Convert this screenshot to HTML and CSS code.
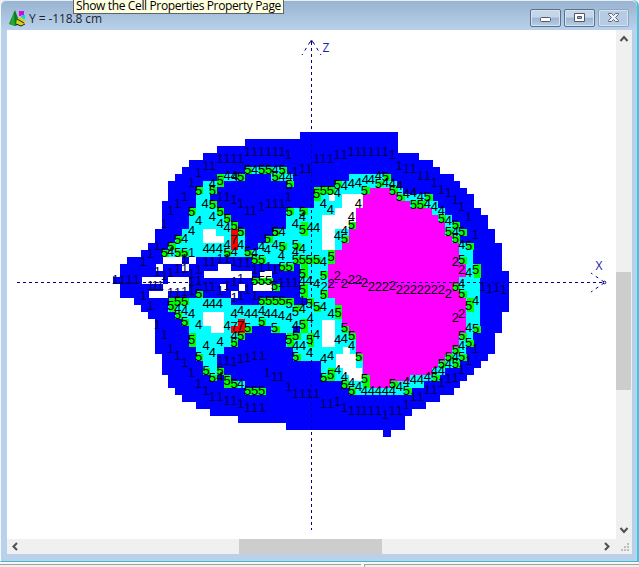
FILE: index.html
```html
<!DOCTYPE html>
<html lang="en">
<head>
<meta charset="utf-8">
<title>Y = -118.8 cm</title>
<link rel="stylesheet" href="styles.css">
</head>
<body>
<div class="window">
  <header class="titlebar">
    <svg class="app-icon" width="17" height="17" viewBox="0 0 17 17">
      <path d="M10 1h5v5h-5z" fill="#e000e0"/><path d="M12 5h4v4h-4z" fill="#00d8e8"/>
      <path d="M6 0l5 14-5 2-6-2z" fill="#087b24"/><path d="M5 2l1 14-5-2z" fill="#20a830"/>
      <path d="M8 9l4-2 4 3v4l-4 2-5-2z" fill="#d8d020"/><path d="M8 9l7 4M7 14l5 2 4-2" fill="none" stroke="#222"/>
    </svg>
    <h1 class="title">Y = -118.8 cm</h1>
    <div class="buttons">
      <span class="btn"><svg width="30" height="16"><rect x="9.5" y="7.500" width="10" height="4" rx="1" fill="#fff" stroke="#535666"/></svg></span>
      <span class="btn"><svg width="30" height="16"><path d="M9.500 3.500h10v8h-10z" fill="#fff" stroke="#535666"/><path d="M12.500 6.500h4v2h-4z" fill="#9bb5d2" stroke="#535666"/></svg></span>
      <span class="btn close"><svg width="30" height="16"><path d="M9.500 3.500h3l2 2 2-2h3v1l-3 3 3 3v1h-3l-2-2-2 2h-3v-1l3-3-3-3z" fill="#edf2f8" stroke="#60677a"/></svg></span>
    </div>
  </header>
  <main class="client">
    <svg class="plot" id="plot" width="609" height="509" viewBox="7 30 609 509">
      <path fill="#00f" shape-rendering="crispEdges" d="M113 277H120V264H127V257H141V250H148V243H155V229H162V201H168V181H175V174H182V167H189V160H203V153H217V146H245V139H300V132H398V153H419V160H433V167H440V174H454V181H460V188H467V194H474V208H481V215H488V229H495V243H502V271H509V312H502V333H495V354H488V361H481V368H474V375H467V381H460V388H454V395H440V402H426V409H412V416H405V430H391V437H383V430H286V423H238V416H210V409H196V402H182V395H175V388H168V375H162V354H155V319H148V312H141V305H134V298H120V284H113Z"/>
      <g id="cells" shape-rendering="crispEdges"></g>
      <g class="axes"><path stroke-dasharray="3 3" shape-rendering="crispEdges" d="M311.500 42V530M17 282.500H602"/><path stroke-dasharray="3 4" d="M310 42L302 55M313 42L321 55M604 282L591 273M604 283L591 292"/></g>
      <circle cx="311.500" cy="41.500" r="1.300" fill="#00008b"/><circle cx="604.500" cy="282.500" r="1.300" fill="none" stroke="#00008b"/>
      <text class="axis" x="322.500" y="52">Z</text><text class="axis" x="595.500" y="270">X</text>
      <g id="labels" class="labels"></g>
    </svg>
    <div class="vscroll"><svg width="16" height="16"><path d="M4.500 11l3.500-4 3.500 4"/></svg><div class="vthumb"></div><svg width="16" height="16"><path d="M4.500 5l3.500 4 3.500-4"/></svg></div>
    <div class="hscroll"><svg width="16" height="15"><path d="M10 4L6.500 7.500 10 11"/></svg><div class="hthumb"></div><svg width="16" height="15"><path d="M5 4l3.500 3.500L5 11"/></svg></div>
    <div class="grip"><svg width="16" height="15"><path d="M11 4h2v2h-2zM8 7h2v2H8zM11 7h2v2h-2zM5 10h2v2H5zM8 10h2v2H8zM11 10h2v2h-2z"/></svg></div>
  </main>
</div>
<footer class="status"><span></span><span></span></footer>
<div class="tooltip">Show the Cell Properties Property Page</div>
<script src="plot.js"></script>
</body>
</html>
```
FILE: styles.css
```css
* { box-sizing: border-box; }
body { margin: 0; width: 639px; height: 567px; overflow: hidden; background: #f0f0f0; font-family: "Noto Sans", "Open Sans", sans-serif; display: flex; flex-direction: column; }
.window { height: 562px; padding: 0 5px 7px 6px; border-left: 1px solid #f4f8fc; border-right: 2px solid #38c8e8; border-bottom: 1px solid #48b4d0; background: #b9d1ea; border-radius: 6px 6px 0 0; display: flex; flex-direction: column; flex: none; }
.titlebar { height: 30px; flex: none; margin: 0 -5px 0 -6px; padding: 9px 8px 0 8px; display: flex; align-items: flex-start; border-top: 1px solid #e8eef5; border-radius: 6px 6px 0 0; background: linear-gradient(#99b4d1, #b9d1ea); }
.app-icon { flex: none; }
.title { margin: 1px 0 0 3px; flex: 1; font: 12px/16px "Open Sans", "Noto Sans", sans-serif; color: #1b2533; white-space: nowrap; letter-spacing: -.1px; }
.buttons { display: flex; gap: 3px; margin-top: -1px; }
.btn { width: 31px; height: 18px; border: 1px solid #59718f; border-radius: 2px; background: linear-gradient(#c5d6e8 45%, #9bb5d2 50%, #b7cde4); box-shadow: inset 0 0 0 1px #d6e4f2; overflow: hidden; }
.btn svg { display: block; }
.close { border-color: #8ca5c2; background: #b6cce3; }
.client { display: grid; grid-template-columns: 609px 16px; grid-template-rows: 509px 15px; background: #f0f0f0; }
.plot { display: block; background: #fff; }
.axes { fill: none; stroke: #00008b; stroke-width: 1; }
.axis { font: 12px "Open Sans", "Noto Sans", sans-serif; fill: #2020b0; }
.labels { font: 13px "Liberation Sans", Arial, sans-serif; text-anchor: middle; fill: #000; }
.labels .one { fill: #000050; }
.vscroll { display: flex; flex-direction: column; }
.vthumb { height: 118px; margin-top: 226px; margin-bottom: 133px; background: #cdcdcd; width: 15px; }
.hscroll { display: flex; }
.hthumb { width: 143px; margin-left: 216px; margin-right: 218px; background: #cdcdcd; }
.vscroll svg, .hscroll svg { display: block; flex: none; fill: none; stroke: #505050; stroke-width: 2; }
.grip svg { display: block; fill: #bfbfbf; }
.status { height: 5px; padding-top: 2px; display: flex; gap: 3px; background: #f7f7f7; }
.status span { border-top: 1px solid #a0a0a0; background: #f0f0f0; flex: 1; }
.status span:first-child { flex: none; width: 361px; }
.status span:last-child { border-left: 1px solid #a0a0a0; }
.tooltip { position: absolute; left: 73px; top: 0; width: 211px; height: 14px; border: 1px solid #646464; border-top: 0; background: #ffffe1; color: #000; font: 12px/11px "Open Sans", "Noto Sans", sans-serif; padding-left: 2px; white-space: nowrap; letter-spacing: -.36px; }
```
FILE: plot.js
```js
const NS = 'http://www.w3.org/2000/svg';
const cells = document.getElementById('cells');
const labels = document.getElementById('labels');

function rect(x0, y0, x1, y1, fill) {
  const r = document.createElementNS(NS, 'rect');
  x0 = Math.round(x0); y0 = Math.round(y0); x1 = Math.round(x1); y1 = Math.round(y1);
  Object.entries({ x: x0, y: y0, width: x1 - x0, height: y1 - y0, fill }).forEach(([k, v]) => r.setAttribute(k, v));
  cells.appendChild(r);
}
// Runs: y0 y1 x0 x1
function runs(fill, data) {
  data.trim().split(/\s*;\s*/).forEach(s => {
    const [a, b, c, d] = s.split(' ').map(Number);
    rect(c, a, d, b, fill);
  });
}
runs('#0ff', `167 174 245 286;174 181 217 245;174 181 271 293;181 188 203 217;188 208 196 210;208 215 189 217;215 222 189 224;222 229 189 231;229 236 182 245;236 243 175 245;243 250 168 245;250 257 168 256;
174 181 349 390;181 188 335 397;188 194 314 403;194 201 314 431;201 208 314 438;208 215 286 445;215 222 286 452;222 229 286 459;229 236 279 466;236 243 271 459;243 250 258 473;250 257 252 473;257 264 265 473;264 271 300 480;271 298 300 480;298 305 307 480;
298 305 189 231;305 312 168 480;312 319 175 480;319 326 182 480;326 333 189 252;326 333 271 480;333 340 189 238;340 347 196 231;347 354 196 224;354 361 196 217;361 368 203 217;368 375 203 224;381 388 224 245;
333 347 286 473;347 361 293 466;361 368 321 459;368 375 321 445;375 381 321 438;381 388 342 424;388 395 349 411`);
runs('#00f', '326 333 293 300;188 195 210 217');
runs('#f0f', `188 194 367 390;194 201 363 397;201 208 363 410;208 215 356 432;215 222 356 438;222 229 356 445;229 236 349 445;236 243 349 452;243 250 342 459;250 264 335 459;264 277 328 466;277 291 328 459;291 298 328 466;298 305 335 466;305 326 342 466;326 333 349 466;333 340 349 459;340 347 356 459;347 354 356 452;354 361 356 445;361 368 363 438;368 375 363 432;375 381 369 410;381 388 369 390`);
runs('#fff', `194 201 329 335;194 208 342 363;208 222 335 356;222 229 335 349;215 250 322 335;
229 243 203 216;236 243 216 224;312 326 203 224;326 333 211 224;
257 264 163 182;264 271 156 163;264 271 182 189;257 264 189 196;277 284 142 163;291 298 149 168;284 291 163 189;277 284 168 189;264 271 218 231;271 278 204 252;284 291 220 226;291 298 231 238;271 278 260 272;284 291 239 245;284 291 253 272;
320 347 322 335;347 354 343 350;354 368 336 356;368 375 343 362;375 381 349 362`);
runs('#f00', '229 250 231 238;326 333 231 245;319 326 238 245');

// Each tile: origin, then labels as value x,y in thirds of a pixel; T marks a cell two rows high.
const tiles = [
[105,125,`1 345,101 366,101 387,101 303,122 322,122 281,143 260,172 239,214 218,236 197,256 178,295 345,214 366,214 387,222
T 345,166
5 322,197 281,197 260,258 322,238 345,258 366,279 387,300
4 322,174 366,152 387,152 300,236 322,275 281,287 260,316 345,295 366,307`],
[235,125,`1 17,101 38,80 59,80 80,80 101,80 122,80 141,80 160,88 181,138 202,130 222,130 245,101 265,101 286,101 307,89 328,88 349,80 370,80 17,235 38,257 56,257 80,243 101,235 122,235 141,235 160,214
5 38,134 80,134 101,134 141,134 17,155 120,155 162,177 162,258 202,258 265,196 286,196 307,177 388,197 349,299 120,320 17,320
T 202,312 245,206
4 59,132 120,132 0,155 141,153 162,153 202,275 181,295 225,308 245,308 307,203 328,182 349,174 370,172 391,164 265,234 286,252 370,234 349,275 328,315 141,318`],
[360,125,`1 13,80 34,80 55,80 76,80 97,88 118,122 139,130 160,130 181,152 202,152 223,172 244,194 265,203 286,223 305,243 326,275 347,328
5 76,155 55,176 97,197 118,215 202,215 160,237 181,237 244,279 286,299 265,320 305,320 286,341 326,362 305,403
T 347,434
4 34,164 55,152 76,172 97,174 118,180 139,204 160,203 181,214 202,234 223,243 244,257 265,287 286,320 305,359 326,443
2 286,409 305,434`],
[105,225,`1 157,60 260,83 136,86 115,108 239,100 303,110 322,110 345,100 366,100 387,108 157,140 178,150 197,143 218,130 239,130 260,145 281,132 31,163 52,163 73,163 94,163 136,182 150,182 166,182 197,202 218,202 239,200 260,195 260,170 281,165 303,185 322,185 345,195 366,180 387,168 115,212 387,218 136,242 157,297
5 218,42 197,63 178,83 218,83 239,83 366,83 281,205 218,228 239,228 218,268 239,290
T 197,240
4 239,40 197,80 303,71 322,71 343,71 366,58 387,80 218,250 303,236 322,236 343,236 260,264 239,255 281,298 387,264 366,300
7 387,42 387,303`],
[235,225,`4 17,58 202,70 120,57 97,72 80,65 59,82 139,92 181,80 265,110 307,30 202,165 222,165 245,174 265,243 17,255 38,266 59,266 80,257 97,264 118,264 139,272 162,278 202,250 225,280 181,300 288,264
5 120,20 97,40 141,63 181,58 38,80 59,102 80,102 181,102 202,102 222,102 245,102 328,40 141,125 162,125 265,152 265,208 59,165 80,165 101,165 118,180 80,226 101,226 122,226 141,226 162,236 222,236 245,243 181,258 80,288 38,308 118,308 328,308
T 288,95 202,145 202,192 309,262 202,298
1 17,112 38,112 59,133 80,127 101,125 120,133 17,160 139,172 160,172 181,172 38,192 17,210 59,210 202,225
2 307,152 288,175 267,185 328,175 349,162 370,162
7 17,300`],
[105,325,`1 178,28 197,70 218,92 239,113 260,142 281,176 303,196 322,214 345,214 366,226 387,226 407,236 428,247 449,247 345,105 366,105 387,110 407,100 428,98 449,92
5 281,95 303,137 322,157 345,137 387,176 428,197 449,197 387,52 407,32
T 260,43 366,167
4 303,60 322,82 345,50 345,155 407,176 387,30`],
[245,325,`1 52,92 66,143 89,153 108,155 131,185 152,206 173,206 194,206 215,206 236,236 257,236 278,228 298,247 320,257 341,257 52,247
5 50,197 152,32 152,95 320,32 341,95 236,157 298,177 320,197
T 131,43 194,43 257,147
4 152,60 173,60 194,82 215,28 278,42 298,40 320,60 236,100 257,92 278,134 298,155 320,172 341,185`],
[360,280,`2 13,8 34,19 55,19 76,19 97,17 118,28 139,28 160,28 181,28 202,28 223,28 244,28 265,40 305,100 286,112
5 286,20 305,40 347,145 305,165 326,187 286,208 305,230 265,230 244,250 286,250 223,292 97,310 139,330
T 326,75 13,295
4 305,10 347,62 326,142 305,197 286,230 265,250 223,270 244,270 202,290 181,298 160,298 139,305 118,320 13,330 34,330 55,330 76,330 97,330
1 368,18 389,24 410,22 431,28 347,205 326,240 305,268 286,292 265,295 244,307 223,328 202,328 181,348 160,348 139,372 118,390 97,390 76,403 55,390 34,390 13,390`]
];
const CW = 6.947, CH = 6.93;
for (const [ox, oy, text] of tiles) {
  for (const line of text.split('\n')) {
    const [kind, ...points] = line.trim().split(' ');
    for (const p of points) {
      const [dx, dy] = p.split(',').map(Number);
      const x = ox + dx / 3, y = oy + dy / 3;
      if (kind === '5' || kind === 'T') {
        const cx = 113 + Math.floor((x - 113) / CW) * CW;
        const row = kind === 'T' ? Math.round((y - 132) / CH) - 1 : Math.floor((y - 132) / CH);
        rect(cx, 132 + row * CH, cx + CW, 132 + (row + (kind === 'T' ? 2 : 1)) * CH, '#0f0');
      }
      const t = document.createElementNS(NS, 'text');
      t.setAttribute('x', x.toFixed(1));
      t.setAttribute('y', Math.round(y + 4.5));
      if (kind === '1') t.setAttribute('class', 'one');
      t.textContent = kind === 'T' ? '5' : kind;
      labels.appendChild(t);
    }
  }
}
```
